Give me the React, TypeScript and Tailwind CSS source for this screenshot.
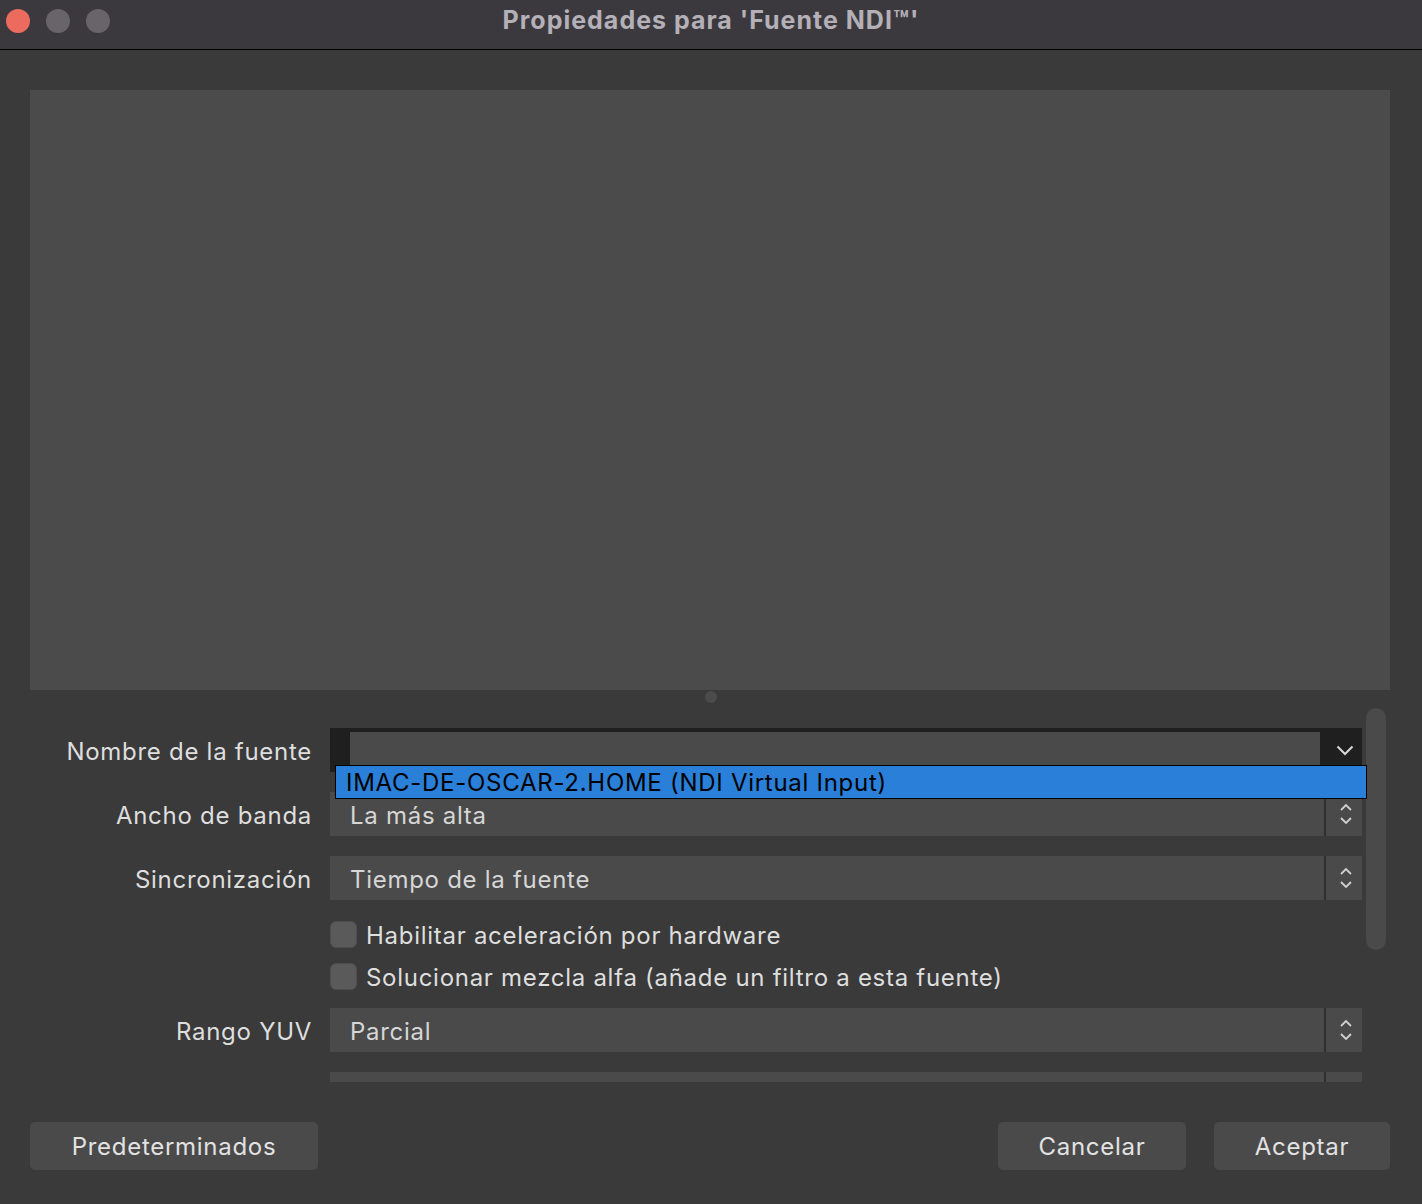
import React from 'react';

const font = { fontFamily: 'Inter, "Liberation Sans", sans-serif' };

function ChevronDown({ className = '' }: { className?: string }) {
  return (
    <svg width="18" height="11" viewBox="0 0 18 11" className={className}>
      <path d="M1.5 1.5 L9 9 L16.5 1.5" fill="none" stroke="currentColor" strokeWidth="2" />
    </svg>
  );
}

function Spinner() {
  return (
    <svg width="14" height="26" viewBox="0 0 14 26">
      <path d="M2 9 L7 4 L12 9" fill="none" stroke="currentColor" strokeWidth="1.8" />
      <path d="M2 17 L7 22 L12 17" fill="none" stroke="currentColor" strokeWidth="1.8" />
    </svg>
  );
}

function Select({ value, clipped = false }: { value?: string; clipped?: boolean }) {
  return (
    <div className={`flex bg-[#4a4a4a] ${clipped ? 'h-[10px]' : 'h-[44px]'} shrink-0`}>
      <div className="flex-1 flex items-center pl-[20px] pt-[3px] text-[24px] tracking-[0.03em] text-[#d6d6d6]">{value}</div>
      <div className="w-[2px] bg-[#2f2f2f]" />
      <div className="w-[36px] pl-[4px] flex items-center justify-center text-[#cfcfcf]">{!clipped && <Spinner />}</div>
    </div>
  );
}

function Row({ label, children }: { label: string; children: React.ReactNode }) {
  return (
    <div className="flex items-center">
      <div className="w-[282px] pr-[18px] pt-[3px] text-right text-[24px] tracking-[0.03em] text-[#dedede] shrink-0 box-content">{label}</div>
      <div className="flex-1">{children}</div>
    </div>
  );
}

function Check({ label }: { label: string }) {
  return (
    <div className="flex items-center h-[28px] pl-[300px]">
      <div className="w-[27px] h-[27px] rounded-[6px] bg-[#5a5a5a] border border-[#4e4e4e] shrink-0" />
      <span className="ml-[9px] pt-[3px] text-[24px] tracking-[0.03em] text-[#dedede]">{label}</span>
    </div>
  );
}

function Button({ children, className }: { children: React.ReactNode; className: string }) {
  return (
    <button className={`h-[48px] pt-[2px] rounded-[5px] bg-[#4a4a4a] text-[24px] tracking-[0.03em] text-[#e2e2e2] ${className}`}>{children}</button>
  );
}

export default function App() {
  return (
    <div className="w-[1422px] h-[1204px] bg-[#3a3a3a] flex flex-col overflow-hidden" style={font}>
      <div className="h-[50px] bg-[#3c393e] border-b border-black flex items-start relative shrink-0">
        <div className="flex items-center gap-[16px] pl-[6px] pt-[9px]">
          <div className="w-[24px] h-[24px] rounded-full bg-[#ec6b5f]" />
          <div className="w-[24px] h-[24px] rounded-full bg-[#68646a]" />
          <div className="w-[24px] h-[24px] rounded-full bg-[#68646a]" />
        </div>
        <div className="absolute inset-0 flex items-center justify-center pb-[7px] text-[25px] tracking-[0.04em] font-bold text-[#b4b0b7]">
          Propiedades para 'Fuente NDI™'
        </div>
      </div>

      <div className="pl-[30px] pr-[32px] pt-[40px] shrink-0">
        <div className="h-[600px] bg-[#4b4b4b]" />
      </div>
      <div className="h-[18px] flex items-center justify-center shrink-0">
        <div className="w-[12px] h-[12px] rounded-full bg-[#4b4b4b] mt-[-4px]" />
      </div>

      <div className="relative h-[374px] flex pl-[30px] shrink-0">
        <div className="w-[1332px] pt-[20px] flex flex-col overflow-hidden">
          <Row label="Nombre de la fuente">
            <div className="h-[44px] bg-[#1f1f1f] flex">
              <div className="ml-[20px] mt-[4px] h-[36px] flex-1 bg-[#4a4a4a]" />
              <div className="w-[42px] pl-[8px] flex items-center justify-center text-[#d8d8d8]">
                <ChevronDown />
              </div>
            </div>
          </Row>
          <div className="h-[20px]" />
          <Row label="Ancho de banda">
            <Select value="La más alta" />
          </Row>
          <div className="h-[20px]" />
          <Row label="Sincronización">
            <Select value="Tiempo de la fuente" />
          </Row>
          <div className="h-[20px]" />
          <Check label="Habilitar aceleración por hardware" />
          <div className="h-[14px]" />
          <Check label="Solucionar mezcla alfa (añade un filtro a esta fuente)" />
          <div className="h-[18px]" />
          <Row label="Rango YUV">
            <Select value="Parcial" />
          </Row>
          <div className="h-[20px]" />
          <div className="pl-[300px]">
            <Select clipped />
          </div>
        </div>
        <div className="ml-[4px] w-[20px] h-[242px] rounded-full bg-[#4a4a4a]" />

        <div className="absolute left-[335px] top-[57px] w-[1032px] h-[34px] bg-[#2a7fd8] border border-black flex items-center pl-[10px] pt-[2px] text-[24px] tracking-[0.03em] text-black">
          IMAC-DE-OSCAR-2.HOME (NDI Virtual Input)
        </div>
      </div>

      <div className="flex items-start pt-[40px] pl-[30px] pr-[32px]">
        <Button className="w-[288px]">Predeterminados</Button>
        <div className="flex-1" />
        <Button className="w-[188px]">Cancelar</Button>
        <Button className="w-[176px] ml-[28px]">Aceptar</Button>
      </div>
    </div>
  );
}
